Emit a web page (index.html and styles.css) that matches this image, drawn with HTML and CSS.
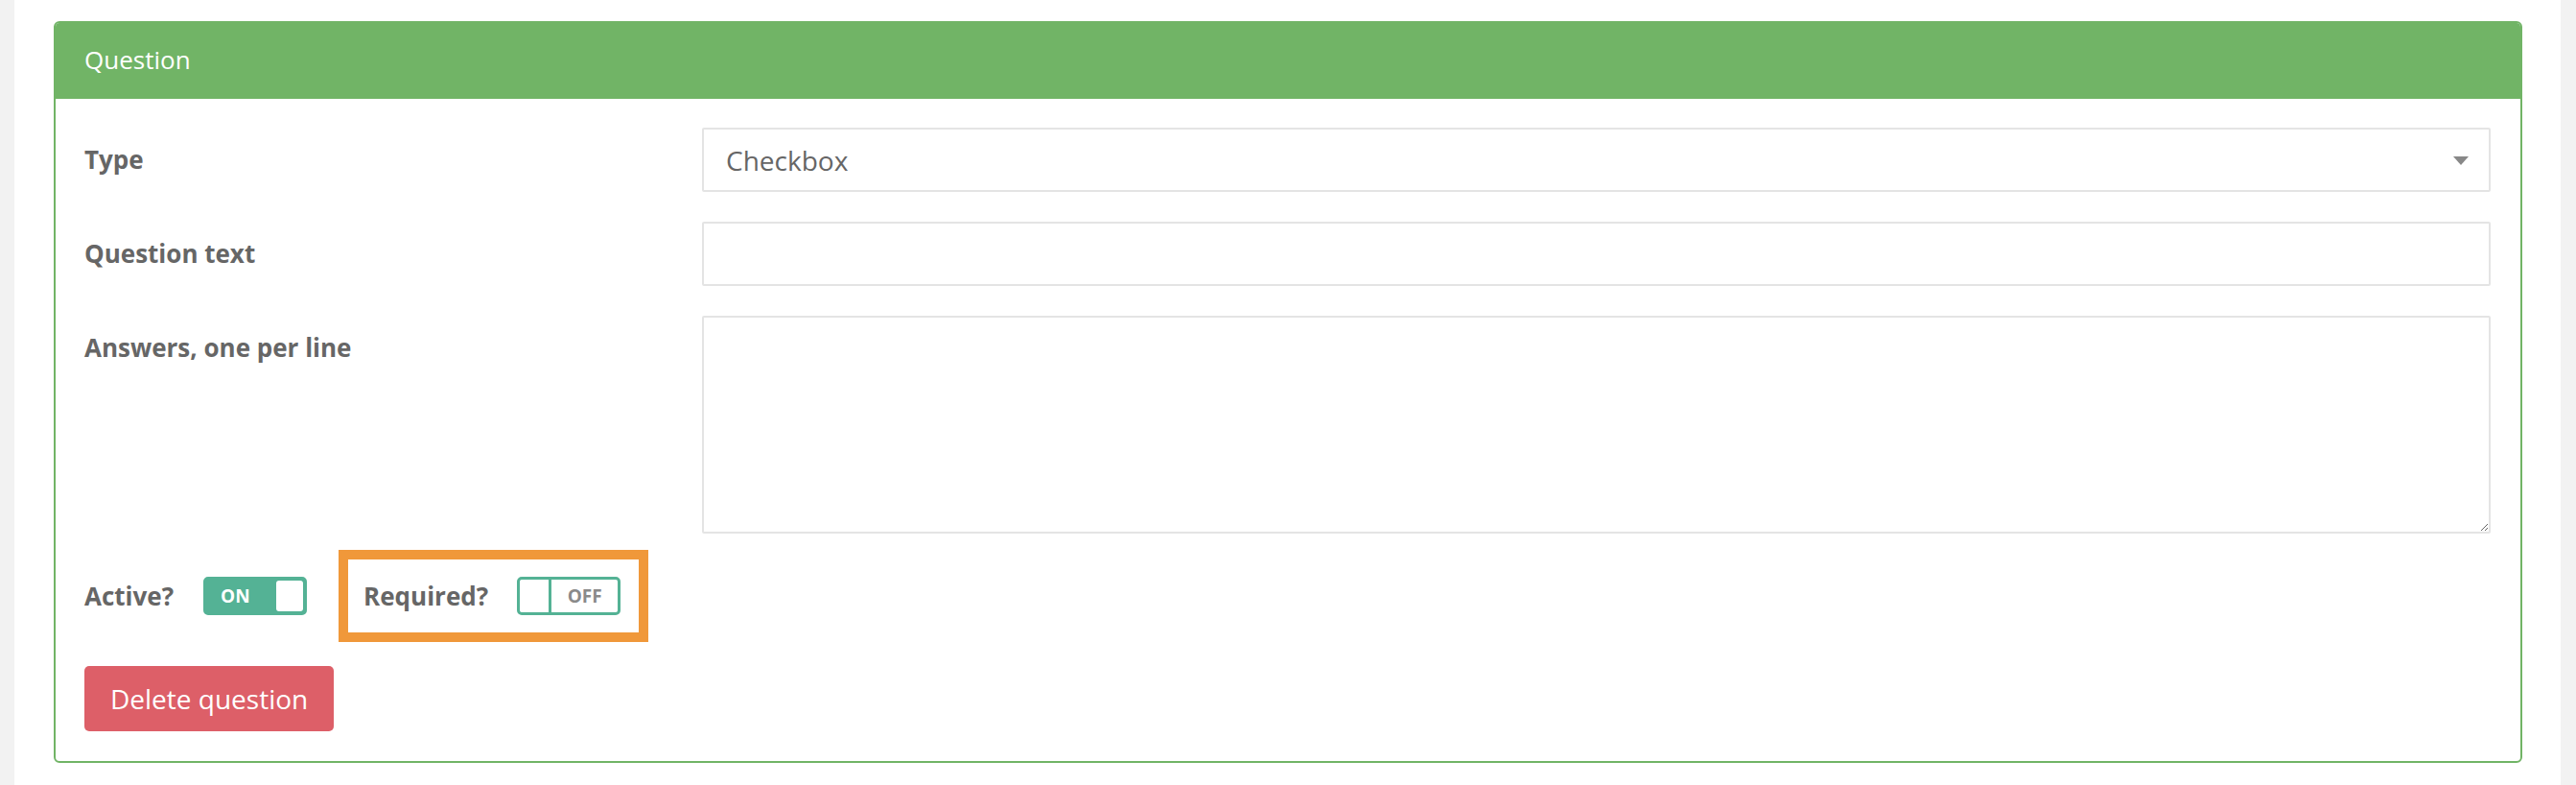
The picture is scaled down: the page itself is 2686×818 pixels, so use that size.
FILE: index.html
```html
<!DOCTYPE html>
<html lang="en">
<head>
    <meta charset="UTF-8">
    <meta name="viewport" content="width=device-width, initial-scale=1.0">
    <title>Question</title>
    <link rel="stylesheet" href="styles.css">
</head>
<body>
    <div class="page">
        <div class="panel">
            <div class="panel-heading">Question</div>
            <div class="panel-body">
                <div class="form-row">
                    <label class="form-label" for="type">Type</label>
                    <div class="select-wrap">
                        <select id="type" class="form-control">
                            <option>Checkbox</option>
                            <option>Radio</option>
                            <option>Text</option>
                        </select>
                    </div>
                </div>

                <div class="form-row">
                    <label class="form-label" for="text">Question text</label>
                    <input type="text" id="text" class="form-control">
                </div>

                <div class="form-row">
                    <label class="form-label" for="answers">Answers, one per line</label>
                    <textarea id="answers" class="form-control answers"></textarea>
                </div>

                <div class="switch-row">
                    <div class="switch-group">
                        <span class="switch-label">Active?</span>
                        <span class="switch switch-on">
                            <span class="switch-text">ON</span>
                            <span class="switch-knob"></span>
                        </span>
                    </div>
                    <div class="switch-group highlight">
                        <span class="switch-label">Required?</span>
                        <span class="switch switch-off">
                            <span class="switch-knob"></span>
                            <span class="switch-text">OFF</span>
                        </span>
                    </div>
                </div>

                <button type="button" class="btn-danger">Delete question</button>
            </div>
        </div>
    </div>
</body>
</html>
```
FILE: styles.css
```css
body {
    margin: 0;
    background: #f2f2f2;
    font-family: "Open Sans", Arial, sans-serif;
    color: #666;
}

.page {
    margin: 0 16px 0 15px;
    min-height: 100vh;
    background: #fff;
    padding: 22px 40px 0 41px;
    box-sizing: border-box;
}

.panel {
    border: 2px solid #71b466;
    border-radius: 6px;
    background: #fff;
}

.panel-heading {
    height: 79px;
    display: flex;
    align-items: center;
    padding: 0 30px 4px;
    box-sizing: border-box;
    background: #71b466;
    color: #fff;
    font-size: 26px;
    border-radius: 4px 4px 0 0;
}

.panel-body {
    padding: 30px 31px 31px 30px;
}

.form-row {
    display: grid;
    grid-template-columns: 644px 1fr;
    margin-bottom: 31px;
}

.form-label {
    padding-top: 15px;
    font-size: 26px;
    font-weight: bold;
    line-height: 36px;
    color: #666;
}

.form-control {
    box-sizing: border-box;
    width: 100%;
    height: 67px;
    padding: 0 23px;
    border: 2px solid #e4e4e4;
    border-radius: 2px;
    background: #fff;
    font-family: inherit;
    font-size: 28px;
    color: #666;
    outline: none;
}

.select-wrap {
    position: relative;
}

.select-wrap select {
    appearance: none;
    -webkit-appearance: none;
}

/* dropdown caret */
.select-wrap::after {
    content: "";
    position: absolute;
    right: 23px;
    top: 30px;
    border-left: 8px solid transparent;
    border-right: 8px solid transparent;
    border-top: 9px solid #888;
}

.answers {
    height: 227px;
    padding: 14px 23px;
    resize: vertical;
}

.switch-row {
    display: flex;
    align-items: center;
    margin-top: -14px;
}

.switch-group {
    display: flex;
    align-items: center;
    gap: 31px;
}

.switch-label {
    font-size: 26px;
    font-weight: bold;
    color: #666;
}

.highlight {
    margin-left: 33px;
    height: 76px;
    padding: 0 19px 0 16px;
    border: 10px solid #f0983a;
    gap: 30px;
}

.switch {
    box-sizing: border-box;
    display: flex;
    width: 108px;
    height: 40px;
    border: 3px solid #54b295;
    border-radius: 5px;
    font-size: 19px;
    font-weight: bold;
}

.switch-on {
    background: #54b295;
    color: #fff;
}

.switch-on .switch-text {
    flex: 1;
    padding-left: 15px;
    line-height: 34px;
}

.switch-on .switch-knob {
    width: 28px;
    margin: 1px;
    background: #fff;
    border-radius: 3px;
}

.switch-off {
    background: #fff;
    color: #8a8a8a;
}

.switch-off .switch-knob {
    width: 30px;
    border-right: 3px solid #54b295;
}

.switch-off .switch-text {
    flex: 1;
    text-align: center;
    line-height: 34px;
}

.btn-danger {
    margin-top: 25px;
    height: 68px;
    padding: 0 27px;
    border: none;
    border-radius: 5px;
    background: #dd5f68;
    color: #fff;
    font-family: inherit;
    font-size: 28px;
}
```
